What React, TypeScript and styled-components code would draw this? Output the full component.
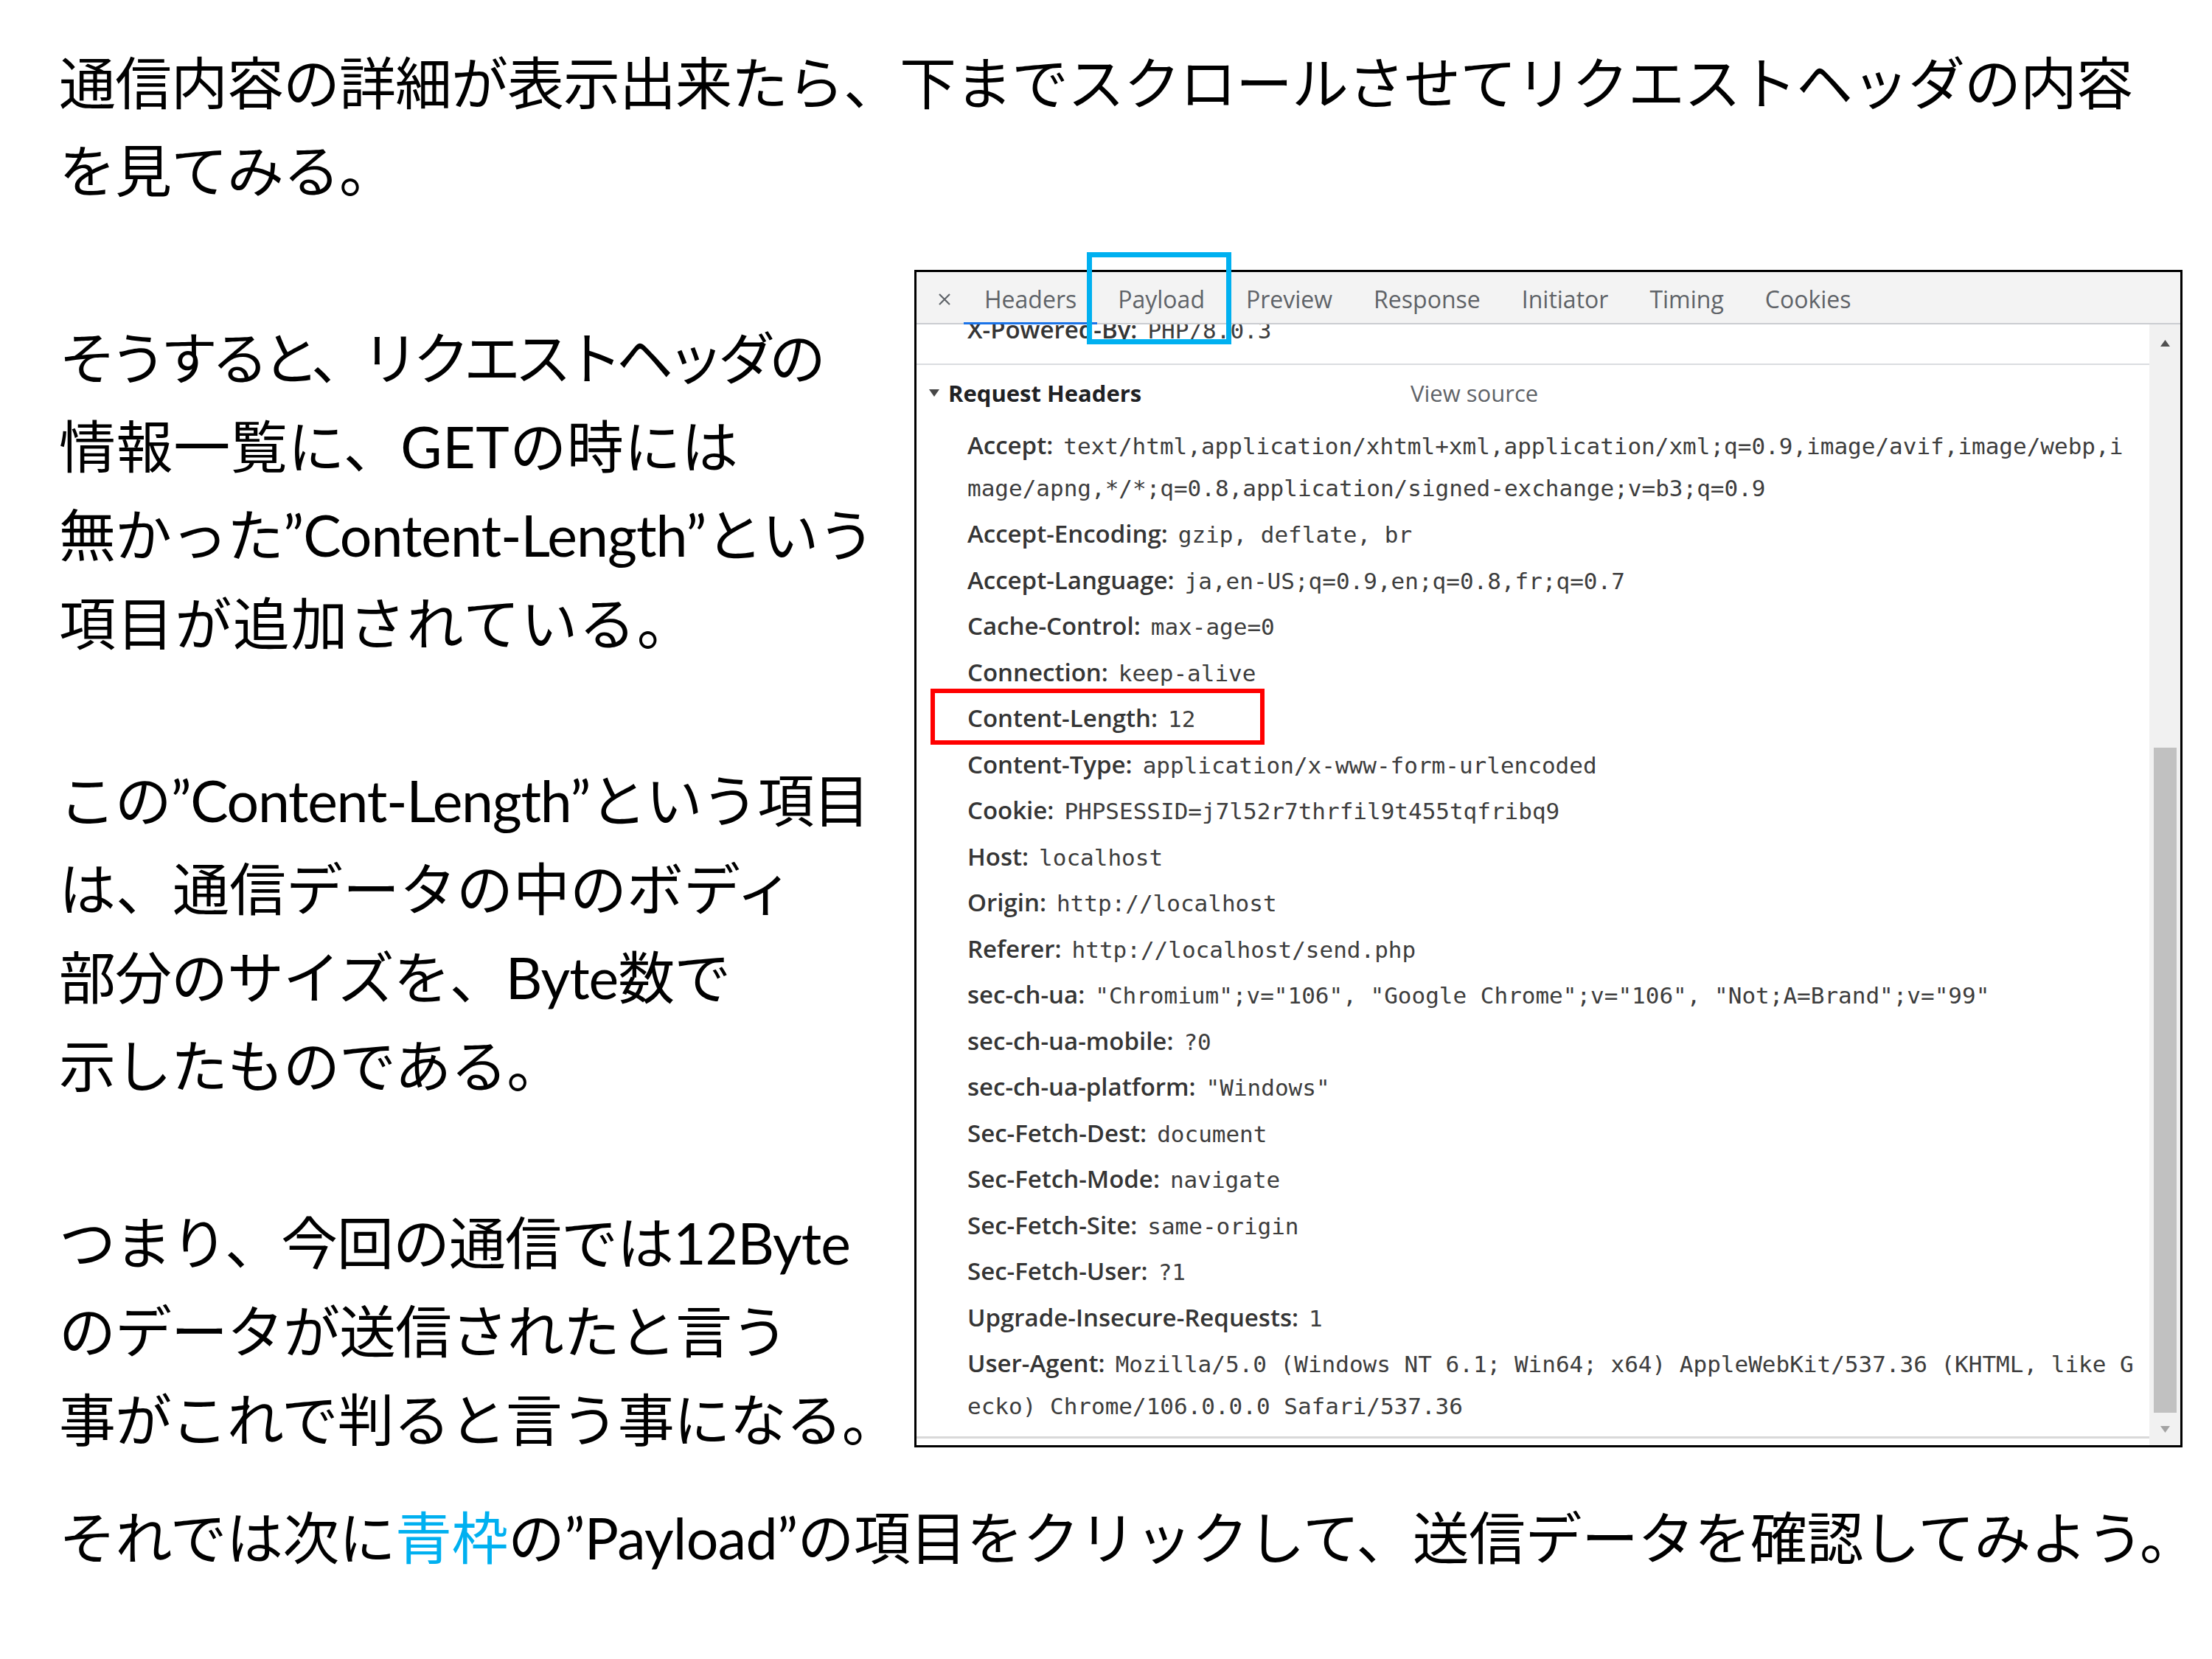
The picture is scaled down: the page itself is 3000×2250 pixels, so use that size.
import React from "react";
import styled, { createGlobalStyle, css } from "styled-components";

const GlobalStyle = createGlobalStyle`
  html, body {
    margin: 0;
    padding: 0;
    background: #ffffff;
  }
`;

const Page = styled.main`
  width: 3000px;
  height: 2250px;
  box-sizing: border-box;
  padding: 53px 0 0 80px;
  font-family: Lato, "Noto Sans CJK JP", sans-serif;
  color: #000;
  overflow: hidden;
`;

const Prose = styled.p<{ $leading?: number }>`
  margin: 0;
  font-size: 77px;
  font-weight: 400;
  line-height: ${(p) => p.$leading ?? 120}px;
  letter-spacing: -1px;
`;

const ProseLine = styled.span<{ $tracking?: number }>`
  display: block;
  white-space: nowrap;
  ${(p) =>
    p.$tracking !== undefined &&
    css`
      letter-spacing: ${p.$tracking}px;
    `}
`;

const Accent = styled.span`
  color: #00b0f0;
`;

const Middle = styled.div`
  display: flex;
  align-items: flex-start;
  margin-top: 75px;
`;

const Notes = styled.div`
  flex: none;
  width: 1160px;
  padding-top: 59px;
  display: flex;
  flex-direction: column;
  gap: 120px;
`;

const Closing = styled(Prose)`
  margin-top: 40px;
`;

/* ---------- DevTools panel ---------- */

const Panel = styled.section`
  position: relative;
  flex: none;
  width: 1720px;
  height: 1597px;
  box-sizing: border-box;
  border: 3px solid #000;
  background: #fff;
  display: flex;
  flex-direction: column;
  font-family: "Open Sans", "Noto Sans", sans-serif;
  letter-spacing: 0;
`;

const TabBar = styled.div`
  flex: none;
  height: 69px;
  border-bottom: 2px solid #cbcdd1;
  background: #f3f3f3;
  display: flex;
  align-items: stretch;
  padding-left: 12px;
`;

const CloseButton = styled.div`
  width: 52px;
  display: flex;
  align-items: center;
  justify-content: center;
  padding-top: 4px;
  box-sizing: border-box;
`;

const Tab = styled.div<{ $active?: boolean }>`
  position: relative;
  display: flex;
  align-items: center;
  padding: 4px 28px 0;
  font-size: 32px;
  color: #5f6368;
  white-space: nowrap;
  ${(p) =>
    p.$active &&
    css`
      &::after {
        content: "";
        position: absolute;
        left: 0;
        right: 0;
        bottom: -2px;
        height: 3px;
        background: #1a73e8;
      }
    `}
`;

const PayloadCallout = styled.span`
  position: absolute;
  z-index: 3;
  left: -14px;
  right: -8px;
  top: -27px;
  bottom: -29px;
  border: 7px solid #00b0f0;
  pointer-events: none;
`;

const Body = styled.div`
  flex: 1;
  min-height: 0;
  display: flex;
`;

const Viewport = styled.div`
  flex: 1;
  min-width: 0;
  display: flex;
  flex-direction: column;
`;

const ScrollArea = styled.div`
  flex: 1;
  min-height: 0;
  overflow: hidden;
`;

const ScrolledContent = styled.div`
  margin-top: -24px;
`;

const BottomRule = styled.div`
  flex: none;
  height: 9px;
  border-top: 3px solid #d9d9d9;
`;

const Divider = styled.div`
  margin-top: 14px;
  height: 2px;
  background: #dadce0;
`;

const SectionHeader = styled.div`
  display: flex;
  align-items: center;
  padding: 16px 0 16px 17px;
  height: 44px;
`;

const SectionTitle = styled.span`
  min-width: 627px;
  font-size: 31px;
  font-weight: 700;
  color: #202124;
  white-space: nowrap;
`;

const ViewSource = styled.span`
  font-size: 31px;
  color: #5f6368;
  white-space: nowrap;
`;

const Caret = styled.svg`
  flex: none;
  margin-right: 12px;
`;

const RowList = styled.div`
  padding-top: 2px;
`;

const HeaderRow = styled.div`
  position: relative;
  padding: 2px 0 2.5px 69px;
`;

const HeaderLine = styled.div`
  height: 58px;
  line-height: 58px;
  white-space: pre;
`;

const Name = styled.span`
  font-size: 33px;
  font-weight: 600;
  color: #353535;
  margin-right: 14px;
`;

const Value = styled.span`
  font-family: "DejaVu Sans Mono", "Liberation Mono", monospace;
  font-size: 31px;
  color: #3d3d3d;
`;

const LengthCallout = styled.span`
  position: absolute;
  left: 19px;
  width: 453px;
  top: -9px;
  bottom: -4px;
  box-sizing: border-box;
  border: 6px solid #ff0000;
  pointer-events: none;
`;

const Scrollbar = styled.div`
  flex: none;
  width: 42px;
  background: #f1f1f1;
  display: flex;
  flex-direction: column;
`;

const ScrollArrow = styled.div<{ $size: number }>`
  flex: none;
  height: ${(p) => p.$size}px;
  display: flex;
  align-items: center;
  justify-content: center;
`;

const Track = styled.div`
  flex: 1;
  min-height: 0;
  display: flex;
  flex-direction: column;
  justify-content: flex-end;
  padding: 0 5px 0 6px;
`;

const Thumb = styled.div`
  height: 902px;
  background: #c1c1c1;
`;

type HeaderItem = { name: string; lines: string[]; marked?: boolean };

const requestHeaders: HeaderItem[] = [
  {
    name: "Accept",
    lines: [
      "text/html,application/xhtml+xml,application/xml;q=0.9,image/avif,image/webp,i",
      "mage/apng,*/*;q=0.8,application/signed-exchange;v=b3;q=0.9",
    ],
  },
  { name: "Accept-Encoding", lines: ["gzip, deflate, br"] },
  { name: "Accept-Language", lines: ["ja,en-US;q=0.9,en;q=0.8,fr;q=0.7"] },
  { name: "Cache-Control", lines: ["max-age=0"] },
  { name: "Connection", lines: ["keep-alive"] },
  { name: "Content-Length", lines: ["12"], marked: true },
  { name: "Content-Type", lines: ["application/x-www-form-urlencoded"] },
  { name: "Cookie", lines: ["PHPSESSID=j7l52r7thrfil9t455tqfribq9"] },
  { name: "Host", lines: ["localhost"] },
  { name: "Origin", lines: ["http://localhost"] },
  { name: "Referer", lines: ["http://localhost/send.php"] },
  {
    name: "sec-ch-ua",
    lines: ['"Chromium";v="106", "Google Chrome";v="106", "Not;A=Brand";v="99"'],
  },
  { name: "sec-ch-ua-mobile", lines: ["?0"] },
  { name: "sec-ch-ua-platform", lines: ['"Windows"'] },
  { name: "Sec-Fetch-Dest", lines: ["document"] },
  { name: "Sec-Fetch-Mode", lines: ["navigate"] },
  { name: "Sec-Fetch-Site", lines: ["same-origin"] },
  { name: "Sec-Fetch-User", lines: ["?1"] },
  { name: "Upgrade-Insecure-Requests", lines: ["1"] },
  {
    name: "User-Agent",
    lines: [
      "Mozilla/5.0 (Windows NT 6.1; Win64; x64) AppleWebKit/537.36 (KHTML, like G",
      "ecko) Chrome/106.0.0.0 Safari/537.36",
    ],
  },
];

const tabs = ["Headers", "Payload", "Preview", "Response", "Initiator", "Timing", "Cookies"];

function Header({ item }: { item: HeaderItem }) {
  return (
    <HeaderRow>
      {item.lines.map((line, i) => (
        <HeaderLine key={i}>
          {i === 0 && <Name>{item.name}:</Name>}
          <Value>{line}</Value>
        </HeaderLine>
      ))}
      {item.marked && <LengthCallout />}
    </HeaderRow>
  );
}

function DevToolsPanel() {
  return (
    <Panel>
      <TabBar>
        <CloseButton>
          <svg width="20" height="20" viewBox="0 0 20 20">
            <path d="M3 3 L17 17 M17 3 L3 17" stroke="#5f6368" strokeWidth="2.2" />
          </svg>
        </CloseButton>
        {tabs.map((t) => (
          <Tab key={t} $active={t === "Headers"}>
            {t}
            {t === "Payload" && <PayloadCallout />}
          </Tab>
        ))}
      </TabBar>
      <Body>
        <Viewport>
          <ScrollArea>
            <ScrolledContent>
              <Header item={{ name: "X-Powered-By", lines: ["PHP/8.0.3"] }} />
              <Divider />
              <SectionHeader>
                <Caret width="14" height="10" viewBox="0 0 14 10">
                  <polygon points="0,0 14,0 7,10" fill="#474747" />
                </Caret>
                <SectionTitle>Request Headers</SectionTitle>
                <ViewSource>View source</ViewSource>
              </SectionHeader>
              <RowList>
                {requestHeaders.map((h) => (
                  <Header key={h.name} item={h} />
                ))}
              </RowList>
            </ScrolledContent>
          </ScrollArea>
          <BottomRule />
        </Viewport>
        <Scrollbar>
          <ScrollArrow $size={50}>
            <svg width="13" height="9" viewBox="0 0 13 9">
              <polygon points="0,9 6.5,0 13,9" fill="#505050" />
            </svg>
          </ScrollArrow>
          <Track>
            <Thumb />
          </Track>
          <ScrollArrow $size={44}>
            <svg width="13" height="9" viewBox="0 0 13 9">
              <polygon points="0,0 13,0 6.5,9" fill="#a3a3a3" />
            </svg>
          </ScrollArrow>
        </Scrollbar>
      </Body>
    </Panel>
  );
}

export default function App() {
  return (
    <>
      <GlobalStyle />
      <Page>
        <Prose $leading={119}>
          <ProseLine>
            通信内容の詳細が表示出来たら、下までスクロールさせてリクエストヘッダの内容
          </ProseLine>
          <ProseLine>を見てみる。</ProseLine>
        </Prose>
        <Middle>
          <Notes>
            <Prose>
              <ProseLine $tracking={-8}>そうすると、リクエストヘッダの</ProseLine>
              <ProseLine $tracking={0.6}>情報一覧に、GETの時には</ProseLine>
              <ProseLine>無かった”Content-Length”という</ProseLine>
              <ProseLine $tracking={1.6}>項目が追加されている。</ProseLine>
            </Prose>
            <Prose>
              <ProseLine $tracking={-1.3}>この”Content-Length”という項目</ProseLine>
              <ProseLine $tracking={0}>は、通信データの中のボディ</ProseLine>
              <ProseLine>部分のサイズを、Byte数で</ProseLine>
              <ProseLine>示したものである。</ProseLine>
            </Prose>
            <Prose>
              <ProseLine>つまり、今回の通信では12Byte</ProseLine>
              <ProseLine>のデータが送信されたと言う</ProseLine>
              <ProseLine>事がこれで判ると言う事になる。</ProseLine>
            </Prose>
          </Notes>
          <DevToolsPanel />
        </Middle>
        <Closing>
          <ProseLine $tracking={-0.6}>
            それでは次に<Accent>青枠</Accent>の”Payload”の項目をクリックして、送信データを確認してみよう。
          </ProseLine>
        </Closing>
      </Page>
    </>
  );
}
